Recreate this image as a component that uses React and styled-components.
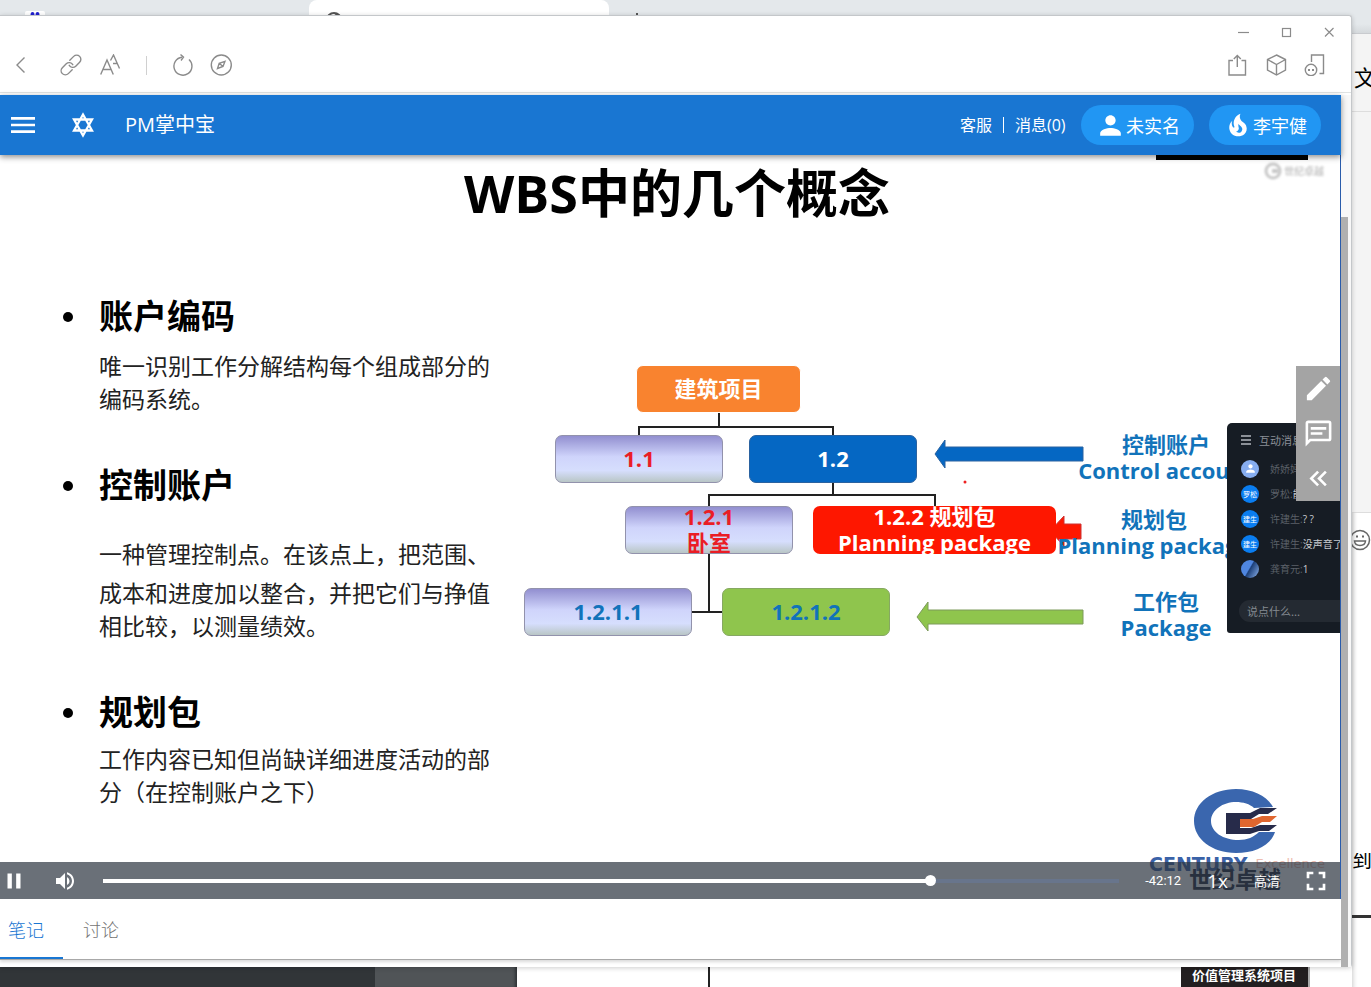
import React, { useState } from "react";
import styled, { createGlobalStyle, css } from "styled-components";
import {
  MdMenu,
  MdPerson,
  MdEdit,
  MdPause,
  MdVolumeUp,
  MdFullscreen,
} from "react-icons/md";

const GlobalStyle = createGlobalStyle`
  *, *::before, *::after { box-sizing: border-box; }
  body {
    margin: 0;
    background: #fff;
    font-family: "Open Sans", "Noto Sans CJK SC", sans-serif;
  }
  button { font-family: inherit; }
  h1, h2, p, ul { margin: 0; padding: 0; }
`;

/* ---------- desktop behind the window ---------- */

const Desktop = styled.div`
  display: grid;
  grid-template-columns: minmax(0, 1fr) 19px;
  grid-template-rows: 15px 1fr 20px;
  min-height: 100vh;
  background: linear-gradient(#e4e8eb 0, #e4e8eb 24px, #d5d9dc 33px, #fff 34px);
`;

const BrowserStrip = styled.div`
  grid-column: 1 / -1;
  display: flex;
  height: 15px;
  overflow: hidden;
  padding-left: 25px;
`;

const Favicon = styled.div`
  flex: none;
  width: 20px;
  margin: 11px 264px 0 0;
  background: #fff;
  border-radius: 2px 2px 0 0;
  svg { display: block; margin: 0 auto; }
`;

const BrowserTab = styled.div`
  flex: none;
  width: 300px;
  padding: 11px 0 0 16px;
  background: #fff;
  border-radius: 8px 8px 0 0;
`;

const NewTabMark = styled.div`
  width: 2px;
  height: 3px;
  margin: 13px 0 0 27px;
  background: #555;
`;

const SideApp = styled.aside`
  grid-column: 2;
  grid-row: 2 / 4;
  display: flex;
  flex-direction: column;
  margin-top: 18px;
  overflow: hidden;
  background: #fff;
  border-top: 1px solid #c9cbcf;
  box-shadow: inset 6px 0 5px -5px #ccc;
`;

const SideTitle = styled.div`
  flex: none;
  height: 78px;
  padding: 26px 0 0 2px;
  background: #f4f4f4;
  border-bottom: 1px solid #ddd;
  font-size: 22px;
  line-height: 34px;
  white-space: nowrap;
`;

const SideBody = styled.div`
  flex: none;
  height: 401px;
  background: #f4f4f4;
  border-bottom: 1px solid #ddd;
`;

const SideInput = styled.div`
  flex: none;
  height: 340px;
  padding-top: 16px;
  svg { display: block; margin-left: -3px; }
`;

const SideNote = styled.div`
  flex: none;
  height: 65px;
  border-bottom: 3px solid #333;
  font-size: 20px;
  line-height: 16px;
  overflow: hidden;
  white-space: nowrap;
`;

const BottomStrip = styled.div`
  grid-column: 1;
  grid-row: 3;
  display: flex;
  overflow: hidden;
  background: #fff;
`;

const DarkBlock = styled.div`
  flex: none;
  width: ${(p) => p.$width}px;
  background: ${(p) => p.$color};
  box-shadow: ${(p) => (p.$edge ? "inset -4px 0 3px -2px #2f3336" : "none")};
`;

const RuleLine = styled.div`
  width: 2px;
  margin-left: 191px;
  background: #222;
`;

const ProjectTag = styled.div`
  margin: 0 42px 0 auto;
  padding: 0 12px 0 11px;
  background: #231f20;
  border-right: 2px solid #aaa;
  color: #fff;
  font-size: 13px;
  font-weight: 700;
  line-height: 17px;
  white-space: nowrap;
`;

/* ---------- window ---------- */

const Window = styled.main`
  position: relative;
  grid-column: 1;
  grid-row: 2;
  background: #fff;
  border: solid #c4c7ca;
  border-width: 1px 1px 0 0;
  border-radius: 0 3px 3px 0;
  box-shadow: 0 1px 5px rgba(0, 0, 0, 0.2);
`;

const CaptionBar = styled.div`
  display: flex;
  justify-content: flex-end;
  align-items: center;
  gap: 21px;
  height: 32px;
  padding-right: 11px;
`;

const Toolbar = styled.nav`
  display: flex;
  align-items: center;
  gap: 17px;
  height: 45px;
  padding: 0 25px 10px 10px;
  border-bottom: 1px solid #e0e3e3;
`;

const ToolButton = styled.button`
  display: flex;
  align-items: center;
  justify-content: center;
  width: 22px;
  height: 24px;
  padding: 0;
  border: 0;
  background: none;
  color: #8b8b8b;
  margin-right: ${(p) => (p.$wide ? "11px" : "0")};
  margin-left: ${(p) => (p.$push ? "auto" : "0")};
`;

const Separator = styled.span`
  width: 1px;
  height: 19px;
  margin: 0 7px 0 8px;
  background: #d0d0d0;
`;

const Content = styled.div`
  display: grid;
  grid-template-columns: minmax(0, 1fr) 10px;
  padding-top: 2px;
`;

const ScrollTrack = styled.div`
  padding-top: 122px;
  background: #f8f8f8;
`;

const ScrollThumb = styled.div`
  width: 7px;
  height: 100%;
  background: #b0b0b0;
`;

/* ---------- app header ---------- */

const Header = styled.header`
  position: relative;
  z-index: 2;
  display: flex;
  align-items: center;
  height: 60px;
  padding: 0 20px 0 7px;
  background: #1976d2;
  color: #fff;
  box-shadow: 0 2px 6px rgba(0, 0, 0, 0.45);
`;

const HeaderButton = styled.button`
  display: flex;
  align-items: center;
  justify-content: center;
  width: 32px;
  height: 32px;
  margin-right: 28px;
  padding: 0;
  border: 0;
  background: none;
  color: inherit;
`;

const Brand = styled.span`
  flex: 1;
  margin-left: -2px;
  font-size: 20px;
  line-height: 28px;
  white-space: nowrap;
`;

const HeaderLink = styled.a`
  padding: 0 11px;
  color: #fff;
  font-size: 16px;
  line-height: 16px;
  text-decoration: none;
  white-space: nowrap;
  & + & {
    min-width: 78px;
    border-left: 1px solid #fff;
  }
`;

const Pill = styled.button`
  display: flex;
  align-items: center;
  height: 40px;
  padding: 0 14px;
  border: 0;
  border-radius: 20px;
  background: #2196f3;
  color: #fff;
  font-size: 18px;
  white-space: nowrap;
  & + & { margin-left: 15px; }
`;

/* ---------- video stage ---------- */

const Stage = styled.section`
  position: relative;
  height: 744px;
  overflow: hidden;
  background: #fff;
  border-right: 1px solid #2a5cab;
`;

const SlideTitle = styled.h1`
  height: 78px;
  padding-left: 14px;
  color: #000;
  font-size: 52px;
  line-height: 76px;
  text-align: center;
`;

const SlideBody = styled.div`
  display: grid;
  grid-template-columns: 524px minmax(0, 1fr);
  padding-top: 66px;
`;

const NoteList = styled.ul`
  padding-left: 63px;
  list-style: none;
`;

const NoteItem = styled.li`
  display: grid;
  grid-template-columns: 36px 1fr;
  margin-bottom: 53px;
`;

const Bullet = styled.span`
  width: 10px;
  height: 10px;
  margin-top: 13px;
  border-radius: 50%;
  background: #000;
`;

const NoteHeading = styled.h2`
  margin-bottom: ${(p) => p.$gap}px;
  color: #000;
  font-size: 34px;
  line-height: 35px;
`;

const NoteText = styled.p`
  margin-bottom: ${(p) => (p.$lead ? "6px" : "0")};
  color: #222;
  font-family: "Noto Sans CJK SC", sans-serif;
  font-size: 23px;
  line-height: 33px;
  white-space: nowrap;
`;

const Diagram = styled.div`
  position: relative;
  height: 280px;
  margin-top: 66px;
  font-size: 22px;
  font-weight: 700;
  line-height: 26px;
  text-align: center;
`;

const Lines = styled.svg`
  position: absolute;
  left: 0;
  top: 0;
`;

const tones = {
  orange: css`background: #f9832f; border: 1px solid #fff;`,
  blue: css`background: #0567c3; border: 1px solid #2a62a0;`,
  red: css`background: #fe1700;`,
  green: css`background: #8fc54d; border: 1px solid #86a862;`,
  pale: css`
    background: linear-gradient(#928fd0 0, #cfd4fb 45%, #d6defd 75%, #b9c6c6 100%);
    border: 1px solid #9292ac;
  `,
};

const Node = styled.div`
  position: absolute;
  left: ${(p) => p.$x}px;
  top: ${(p) => p.$y}px;
  width: ${(p) => p.$w}px;
  height: 48px;
  display: flex;
  align-items: center;
  justify-content: center;
  padding-bottom: 2px;
  border-radius: 7px;
  white-space: pre;
  ${(p) => tones[p.$tone]}
  color: ${(p) => p.$ink};
`;

const Label = styled.div`
  position: absolute;
  left: ${(p) => p.$x}px;
  top: ${(p) => p.$y}px;
  width: 200px;
  color: #1173ba;
  white-space: pre;
`;

const BlackBar = styled.div`
  position: absolute;
  right: 32px;
  top: 0;
  width: 152px;
  height: 5px;
  background: #000;
`;

const Watermark = styled.div`
  position: absolute;
  right: 16px;
  top: 7px;
  display: flex;
  align-items: center;
  gap: 2px;
  color: #c8c8c8;
  font-size: 10px;
  font-weight: 700;
  line-height: 18px;
  filter: blur(1px);
`;

const ChatPanel = styled.section`
  position: absolute;
  right: 0;
  top: 268px;
  width: 113px;
  height: 210px;
  padding: 7px 0 0 14px;
  overflow: hidden;
  border-radius: 5px 0 0 3px;
  background: #161c24;
  color: #8b9097;
  font-size: 10px;
  white-space: nowrap;
`;

const ChatTitle = styled.div`
  display: flex;
  align-items: center;
  gap: 8px;
  height: 20px;
  margin-bottom: 6px;
  font-size: 11px;
`;

const ChatRow = styled.div`
  display: flex;
  align-items: center;
  gap: 11px;
  height: 25px;
  color: #5b6068;
  b { color: #c9ccd0; font-weight: 400; }
`;

const Avatar = styled.span`
  display: flex;
  flex: none;
  align-items: center;
  justify-content: center;
  width: 18px;
  height: 18px;
  border-radius: 50%;
  background: ${(p) => p.$color};
  color: #fff;
  font-size: 7px;
`;

const ChatInput = styled.input`
  display: block;
  width: 130px;
  height: 22px;
  margin: 19px 0 0 -2px;
  padding: 0 8px;
  border: 0;
  border-radius: 11px;
  background: #242a32;
  font: 11px "Noto Sans CJK SC", sans-serif;
  &::placeholder { color: #858a91; opacity: 1; }
`;

const SideTools = styled.div`
  position: absolute;
  right: -1px;
  top: 211px;
  display: flex;
  flex-direction: column;
`;

const SideTool = styled.button`
  display: flex;
  align-items: center;
  justify-content: center;
  width: 45px;
  height: 45px;
  padding: 0;
  border: 0;
  background: #a4a4a4;
  color: #fff;
`;

const Company = styled.div`
  position: absolute;
  right: 15px;
  bottom: 14px;
  width: 176px;
  text-align: center;
  svg { display: block; margin-left: 44px; }
`;

const CompanyLatin = styled.div`
  display: flex;
  align-items: center;
  justify-content: space-between;
  height: 19px;
  font-family: "DejaVu Sans", sans-serif;
  strong { color: #3a62a8; font-size: 19px; }
  span { color: #eebdb0; font-size: 13px; }
`;

const CompanyName = styled.div`
  padding-right: 4px;
  color: #222a3c;
  font-size: 23px;
  font-weight: 700;
  line-height: 12px;
`;

const Controls = styled.div`
  position: absolute;
  left: 0;
  right: 0;
  bottom: 0;
  display: flex;
  align-items: center;
  gap: 26px;
  height: 37px;
  padding: 0 8px 0 1px;
  background: rgba(43, 51, 63, 0.7);
  color: #fff;
`;

const ControlButton = styled.button`
  display: flex;
  flex: none;
  align-items: center;
  justify-content: center;
  min-width: ${(p) => (p.$text ? "0" : "24px")};
  margin-left: ${(p) => (p.$tight ? "-6px" : "0")};
  padding: 0;
  border: 0;
  background: none;
  color: #fff;
  font-size: ${(p) => p.$text || 13}px;
  line-height: 20px;
`;

const Seek = styled.input`
  flex: 1;
  min-width: 0;
  height: 4px;
  margin: 0;
  appearance: none;
  background: linear-gradient(to right, #fff ${(p) => p.$done}%, #68758c ${(p) => p.$done}%);
  &::-webkit-slider-thumb {
    appearance: none;
    width: 11px;
    height: 11px;
    border-radius: 50%;
    background: #fff;
  }
`;

const Time = styled.time`
  font-family: Roboto, sans-serif;
  font-size: 13px;
`;

/* ---------- tabs ---------- */

const Tabs = styled.div`
  display: flex;
  height: 61px;
  margin-bottom: 7px;
  border-bottom: 1px solid #a8a8a8;
  box-shadow: 0 2px 3px rgba(0, 0, 0, 0.15);
`;

const Tab = styled.button`
  padding: ${(p) => (p.$first ? "2px 19px 0 8px" : "2px 20px 0")};
  border: 0;
  border-bottom: 2px solid ${(p) => (p.$active ? "#1976d2" : "transparent")};
  background: none;
  color: ${(p) => (p.$active ? "#1976d2" : "#757575")};
  font-family: "Noto Sans CJK SC", sans-serif;
  font-size: 18px;
  font-weight: 300;
`;

/* ---------- drawings ---------- */

const Stroke = ({ children, size = 22, width = 1.4 }) => (
  <svg
    width={size}
    height={size}
    viewBox="0 0 22 22"
    fill="none"
    stroke="currentColor"
    strokeWidth={width}
    aria-hidden="true"
  >
    {children}
  </svg>
);

const toolIcons = {
  back: <path d="M14.500 3.500 7 11l7.500 7.500" />,
  link: (
    <g transform="rotate(-45 11 11)" strokeLinecap="round">
      <path d="M8.500 15.200H3A4.200 4.200 0 0 1 3 6.800H8.500A4.200 4.200 0 0 1 12.500 12" />
      <path d="M13.500 6.800H19A4.200 4.200 0 0 1 19 15.200H13.500A4.200 4.200 0 0 1 9.500 10" />
    </g>
  ),
  font: (
    <>
      <path d="M1.700 20.500 8 6 14.300 20.500M4 15.500H12" />
      <path d="M11.500 6.500 14.500 1 20.500 14.500M14 9.500H18" />
    </>
  ),
  reload: (
    <>
      <path d="M18 5.500A9 9 0 1 1 11 3.200" />
      <path d="M9.500 0.500 12.500 3.200 10 6.500" />
    </>
  ),
  compass: (
    <>
      <circle cx="11.300" cy="11" r="10" />
      <path d="M15 7.300 13 12.500 7.500 14.500 9.200 9.300ZM9.200 9.300 13 12.500" />
    </>
  ),
  share: (
    <>
      <path d="M7 6.500H3V21H19.500V6.500H15.500" />
      <path d="M11.300 13V1.500M7.800 5 11.300 1.500 14.800 5" />
    </>
  ),
  cube: <path d="M11.500 1 20.500 5.500V16L11.500 21 2.500 16V5.500ZM2.500 5.500 11.500 10.500 20.500 5.500M11.500 10.500V21" />,
  device: (
    <>
      <path d="M7.500 8V1H19.500V19.500H15.500" />
      <circle cx="7" cy="16" r="5.700" />
      <path d="M4 16H6M8 16H10" strokeWidth="2" />
    </>
  ),
};

const windowIcons = {
  minimize: <path d="M6 11.500H17" />,
  maximize: <rect x="7.500" y="7.500" width="8" height="8" />,
  close: <path d="M7 7 15.500 15.500M15.500 7 7 15.500" />,
};

const windowNames = { minimize: "最小化", maximize: "最大化", close: "关闭" };

const Fire = () => (
  <svg width="30" height="30" viewBox="0 0 24 24" fill="currentColor" aria-hidden="true">
    <path d="M17.66 11.2C17.43 10.9 17.15 10.64 16.89 10.38C16.22 9.78 15.46 9.35 14.82 8.72C13.33 7.26 13 4.85 13.95 3C13 3.23 12.17 3.75 11.46 4.32C8.87 6.4 7.85 10.07 9.07 13.22C9.11 13.32 9.15 13.42 9.15 13.55C9.15 13.77 9 13.97 8.8 14.05C8.57 14.15 8.33 14.09 8.14 13.93C8.08 13.88 8.04 13.83 8 13.76C6.87 12.33 6.69 10.28 7.45 8.64C5.78 10 4.87 12.3 5 14.47C5.06 14.97 5.12 15.47 5.29 15.97C5.43 16.57 5.7 17.17 6 17.7C7.08 19.43 8.95 20.67 10.96 20.92C13.1 21.19 15.39 20.8 17.03 19.32C18.86 17.66 19.5 15 18.56 12.72L18.43 12.46C18.22 12 17.66 11.2 17.66 11.2M14.5 17.5C14.22 17.74 13.76 18 13.4 18.1C12.28 18.5 11.16 17.94 10.5 17.28C11.69 17 12.4 16.12 12.61 15.23C12.78 14.43 12.46 13.77 12.33 13C12.21 12.26 12.23 11.63 12.5 10.94C12.69 11.32 12.89 11.7 13.13 12C13.9 13 15.11 13.44 15.37 14.8C15.41 14.94 15.43 15.08 15.43 15.23C15.46 16.05 15.1 16.95 14.5 17.5Z" />
  </svg>
);

const Star = () => (
  <svg width="26" height="26" viewBox="0 0 26 26" fill="none" stroke="#fff" strokeWidth="2.300" aria-hidden="true">
    <path d="M13 2.500 22 18.500H4ZM13 23.500 4 7.500H22Z" />
  </svg>
);

const Message = () => (
  <svg width="31" height="31" viewBox="0 0 24 24" fill="currentColor" aria-hidden="true">
    <path d="M20 2A2 2 0 0 1 22 4V16A2 2 0 0 1 20 18H6L2 22V4C2 2.890 2.900 2 4 2H20M4 4V17.170L5.170 16H20V4H4M6 7H18V9H6V7M6 11H15V13H6V11Z" />
  </svg>
);

const ChevronsLeft = () => (
  <svg width="31" height="31" viewBox="0 0 24 24" fill="currentColor" aria-hidden="true">
    <path d="M18.410 7.410 17 6 11 12 17 18 18.410 16.590 13.830 12ZM12.410 7.410 11 6 5 12 11 18 12.410 16.590 7.830 12Z" />
  </svg>
);

const CompanyMark = () => (
  <svg width="86" height="66" viewBox="0 0 86 66" aria-hidden="true">
    <path
      fill="#3a66ae"
      d="M80 19C74 8 60 1 43 1 19 1 1 15 1 33S19 65 43 65C62 65 78 57 82 44H66C61 49 54 52 46 52 30 52 18 44 18 33S30 14 43 14C50 14 57 16 61 20Z"
    />
    <path fill="#272b4a" d="M33 25H57L67 20H84L75 26H66L58 31H47V40H58L67 37H84L76 43H66L57 46H33Z" />
    <path fill="#e0662f" d="M47 31H60L69 28H84L77 34H69L61 39H47Z" />
  </svg>
);

const nodes = [
  { text: "建筑项目", x: 112, y: 0, w: 165, tone: "orange", ink: "#fff" },
  { text: "1.1", x: 31, y: 70, w: 168, tone: "pale", ink: "#ea1d25" },
  { text: "1.2", x: 225, y: 70, w: 168, tone: "blue", ink: "#fff" },
  { text: "1.2.1\n卧室", x: 101, y: 141, w: 168, tone: "pale", ink: "#ea1d25" },
  { text: "1.2.2 规划包\nPlanning package", x: 289, y: 141, w: 243, tone: "red", ink: "#fff" },
  { text: "1.2.1.1", x: 0, y: 223, w: 168, tone: "pale", ink: "#1173ba" },
  { text: "1.2.1.2", x: 198, y: 223, w: 168, tone: "green", ink: "#1173ba" },
];

const labels = [
  { text: "控制账户\nControl account", x: 542, y: 66 },
  { text: "规划包\nPlanning package", x: 530, y: 141 },
  { text: "工作包\nPackage", x: 542, y: 223 },
];

const notes = [
  { title: "账户编码", gap: 15, lines: ["唯一识别工作分解结构每个组成部分的", "编码系统。"] },
  {
    title: "控制账户",
    gap: 34,
    lead: true,
    lines: ["一种管理控制点。在该点上，把范围、", "成本和进度加以整合，并把它们与挣值", "相比较，以测量绩效。"],
  },
  { title: "规划包", gap: 12, lines: ["工作内容已知但尚缺详细进度活动的部", "分（在控制账户之下）"] },
];

const chat = [
  { name: "娇娇妈:", text: "", mark: "", color: "#86adf0" },
  { name: "罗松:", text: "能", mark: "罗松", color: "#0a7df0" },
  { name: "许建生:", text: "? ?", mark: "建生", color: "#0a7df0" },
  { name: "许建生:", text: "没声音了?", mark: "建生", color: "#0a7df0" },
  { name: "龚育元:", text: "1", mark: "", color: "linear-gradient(120deg, #4f86e0 45%, #1c3f78 50%, #8fb5ee)" },
];

function Player() {
  const [position, setPosition] = useState(818);
  return (
    <Controls>
      <ControlButton aria-label="暂停"><MdPause size={26} /></ControlButton>
      <ControlButton aria-label="音量"><MdVolumeUp size={24} /></ControlButton>
      <Seek
        type="range"
        aria-label="播放进度"
        min="0"
        max="1000"
        value={position}
        $done={position / 10}
        onChange={(e) => setPosition(Number(e.target.value))}
      />
      <Time>-42:12</Time>
      <ControlButton $text={19}>1x</ControlButton>
      <ControlButton $text={13}>高清</ControlButton>
      <ControlButton $tight aria-label="全屏"><MdFullscreen size={32} /></ControlButton>
    </Controls>
  );
}

function Slide() {
  return (
    <Stage>
      <SlideTitle>WBS中的几个概念</SlideTitle>
      <SlideBody>
        <NoteList>
          {notes.map((n) => (
            <NoteItem key={n.title}>
              <Bullet />
              <div>
                <NoteHeading $gap={n.gap}>{n.title}</NoteHeading>
                {n.lines.map((line, i) => (
                  <NoteText key={line} $lead={n.lead && i === 0}>{line}</NoteText>
                ))}
              </div>
            </NoteItem>
          ))}
        </NoteList>
        <Diagram>
          <Lines width="600" height="280" aria-hidden="true">
            <g fill="none" stroke="#222" strokeWidth="2">
              <path d="M195 48V62M115 71V62H309V71M309 118V130M185 142V130H411V142M185 188V247M168 247H198" />
            </g>
            <path d="M411 89 421 75V82H559V96H421V103Z" fill="#0567c3" stroke="#2a62a0" />
            <path d="M526 166 540 151V159H557V174H540V181Z" fill="#fe1700" stroke="#c33" />
            <path d="M393 252 404 237V245H559V259H404V266Z" fill="#8fc54d" stroke="#7c9a5b" />
            <circle cx="441" cy="117" r="1.500" fill="#e22" />
          </Lines>
          {nodes.map((n) => (
            <Node key={n.text} $x={n.x} $y={n.y} $w={n.w} $tone={n.tone} $ink={n.ink}>{n.text}</Node>
          ))}
          {labels.map((l) => (
            <Label key={l.text} $x={l.x} $y={l.y}>{l.text}</Label>
          ))}
        </Diagram>
      </SlideBody>
      <BlackBar />
      <Watermark>
        <svg width="18" height="18" viewBox="0 0 18 18" fill="none" stroke="currentColor" aria-hidden="true">
          <circle cx="9" cy="9" r="7" strokeWidth="3" />
          <path d="M8 9H14" strokeWidth="4" />
        </svg>
        世纪卓越
      </Watermark>
      <ChatPanel>
        <ChatTitle>
          <svg width="10" height="10" stroke="currentColor" strokeWidth="2" aria-hidden="true">
            <path d="M0 1H10M0 5H10M0 9H10" />
          </svg>
          互动消息
        </ChatTitle>
        {chat.map((c, i) => (
          <ChatRow key={i}>
            <Avatar $color={c.color}>{i === 0 ? <MdPerson size={13} /> : c.mark}</Avatar>
            <span>{c.name}<b>{c.text}</b></span>
          </ChatRow>
        ))}
        <ChatInput aria-label="聊天" placeholder="说点什么..." />
      </ChatPanel>
      <SideTools>
        <SideTool aria-label="编辑"><MdEdit size={31} /></SideTool>
        <SideTool aria-label="留言"><Message /></SideTool>
        <SideTool aria-label="展开"><ChevronsLeft /></SideTool>
      </SideTools>
      <Company>
        <CompanyMark />
        <CompanyLatin><strong>CENTURY</strong><span>Excellence</span></CompanyLatin>
        <CompanyName>世纪卓越</CompanyName>
      </Company>
      <Player />
    </Stage>
  );
}

export default function App() {
  const [tab, setTab] = useState("笔记");
  return (
    <>
      <GlobalStyle />
      <Desktop>
        <BrowserStrip>
          <Favicon>
            <svg width="10" height="6" fill="#2222d0" aria-hidden="true">
              <ellipse cx="2.500" cy="4" rx="2" ry="3" />
              <ellipse cx="7.500" cy="4" rx="2" ry="3" />
            </svg>
          </Favicon>
          <BrowserTab>
            <svg width="18" height="18" viewBox="0 0 18 18" aria-hidden="true">
              <circle cx="9" cy="9" r="7" fill="none" stroke="#555" strokeWidth="2" />
              <path d="M8 2 14 3 12 5Z" fill="#555" />
            </svg>
          </BrowserTab>
          <NewTabMark />
        </BrowserStrip>

        <SideApp>
          <SideTitle>文</SideTitle>
          <SideBody />
          <SideInput>
            <svg width="22" height="22" viewBox="0 0 22 22" fill="none" stroke="#666" strokeWidth="1.500" aria-hidden="true">
              <circle cx="11" cy="11" r="9.500" />
              <path d="M5.500 12H16.500C16 18 6 18 5.500 12Z" />
              <path d="M7 7.500H9M13 7.500H15" strokeWidth="2" />
            </svg>
          </SideInput>
          <SideNote>到</SideNote>
        </SideApp>

        <Window>
          <CaptionBar>
            {Object.keys(windowIcons).map((k) => (
              <ToolButton key={k} aria-label={windowNames[k]}>
                <Stroke width={1.2}>{windowIcons[k]}</Stroke>
              </ToolButton>
            ))}
          </CaptionBar>
          <Toolbar>
            <ToolButton $wide aria-label="返回"><Stroke>{toolIcons.back}</Stroke></ToolButton>
            <ToolButton aria-label="链接"><Stroke>{toolIcons.link}</Stroke></ToolButton>
            <ToolButton aria-label="字体"><Stroke>{toolIcons.font}</Stroke></ToolButton>
            <Separator />
            <ToolButton aria-label="刷新"><Stroke>{toolIcons.reload}</Stroke></ToolButton>
            <ToolButton aria-label="浏览器"><Stroke>{toolIcons.compass}</Stroke></ToolButton>
            <ToolButton $push aria-label="分享"><Stroke>{toolIcons.share}</Stroke></ToolButton>
            <ToolButton aria-label="收藏"><Stroke>{toolIcons.cube}</Stroke></ToolButton>
            <ToolButton aria-label="设备"><Stroke>{toolIcons.device}</Stroke></ToolButton>
          </Toolbar>
          <Content>
            <div>
              <Header>
                <HeaderButton aria-label="菜单"><MdMenu size={32} /></HeaderButton>
                <HeaderButton aria-label="首页"><Star /></HeaderButton>
                <Brand>PM掌中宝</Brand>
                <HeaderLink href="#service">客服</HeaderLink>
                <HeaderLink href="#messages">消息(0)</HeaderLink>
                <Pill><MdPerson size={31} />未实名</Pill>
                <Pill><Fire />李宇健</Pill>
              </Header>
              <Slide />
              <Tabs role="tablist">
                {["笔记", "讨论"].map((name, i) => (
                  <Tab
                    key={name}
                    role="tab"
                    aria-selected={tab === name}
                    $first={i === 0}
                    $active={tab === name}
                    onClick={() => setTab(name)}
                  >
                    {name}
                  </Tab>
                ))}
              </Tabs>
            </div>
            <ScrollTrack><ScrollThumb /></ScrollTrack>
          </Content>
        </Window>

        <BottomStrip>
          <DarkBlock $width={375} $color="#313538" />
          <DarkBlock $width={142} $color="#505457" $edge />
          <RuleLine />
          <ProjectTag>价值管理系统项目</ProjectTag>
        </BottomStrip>
      </Desktop>
    </>
  );
}
